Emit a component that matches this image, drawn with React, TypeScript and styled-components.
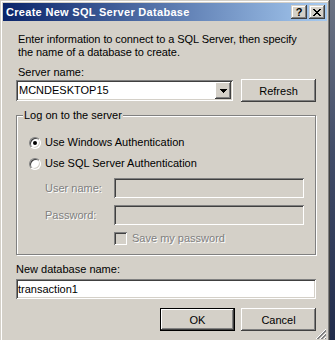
import * as React from "react";
import styled, {createGlobalStyle, css} from "styled-components";

const face = "#D4D0C8";
const shadow = "#808080";
const dark = "#404040";
const light = "#FFFFFF";

const raised = css`
    background: ${face};
    box-shadow: inset -1px -1px ${dark}, inset 1px 1px ${light},
        inset -2px -2px ${shadow}, inset 2px 2px ${face};
`;

const sunken = css`
    box-shadow: inset 1px 1px ${shadow}, inset -1px -1px ${light},
        inset 2px 2px ${dark}, inset -2px -2px ${face};
`;

const GlobalStyle = createGlobalStyle`
    html, body {
        margin: 0;
        padding: 0;
    }
    body {
        width: 335px;
        height: 340px;
        overflow: hidden;
        background: linear-gradient(180deg, #6b7384 0%, #414c68 45%, #212c4c 100%);
        font-family: "Liberation Sans", Arial, sans-serif;
        font-size: 11px;
        color: #000;
    }
`;

const Window = styled.div`
    position: relative;
    box-sizing: border-box;
    width: 330px;
    height: 343px;
    padding: 3px;
    background: ${face};
    box-shadow: inset -1px -1px ${dark}, inset 1px 1px ${face},
        inset -2px -2px ${shadow}, inset 2px 2px ${light};
    display: flex;
    flex-direction: column;
`;

const TitleBar = styled.div`
    display: flex;
    align-items: center;
    flex-shrink: 0;
    height: 18px;
    padding: 0 2px 0 3px;
    background: linear-gradient(90deg, #0a246a 0%, #a6caf0 100%);
`;

const Title = styled.span`
    flex: 1;
    color: #fff;
    font-weight: bold;
    font-size: 11px;
    letter-spacing: 0.3px;
    white-space: nowrap;
`;

const CaptionButton = styled.div`
    box-sizing: border-box;
    width: 16px;
    height: 14px;
    margin-left: 2px;
    display: flex;
    align-items: center;
    justify-content: center;
    font-weight: bold;
    font-size: 11px;
    line-height: 14px;
    background: ${face};
    box-shadow: inset -1px -1px ${dark}, inset 1px 1px ${face},
        inset -2px -2px ${shadow}, inset 2px 2px ${light};
`;

const Body = styled.div`
    display: flex;
    flex-direction: column;
    padding: 12px 11px 0 13px;
`;

const Intro = styled.p`
    margin: 0 0 7px 2px;
    line-height: 13px;
    letter-spacing: -0.08px;
    white-space: nowrap;
`;

const FieldLabel = styled.label<{$indent?: number}>`
    display: block;
    line-height: 13px;
    white-space: nowrap;
    padding-left: ${(p) => p.$indent ?? 0}px;
`;

const ServerRow = styled.div`
    display: flex;
    align-items: center;
    gap: 8px;
    height: 23px;
`;

const Combo = styled.div`
    box-sizing: border-box;
    display: flex;
    align-items: center;
    width: 217px;
    height: 21px;
    padding: 2px;
    background: #fff;
    ${sunken};
`;

const ComboText = styled.span`
    flex: 1;
    padding-left: 1px;
    line-height: 17px;
`;

const DropButton = styled.div`
    box-sizing: border-box;
    width: 16px;
    height: 17px;
    display: flex;
    align-items: center;
    justify-content: center;
    ${raised};
`;

const PushButton = styled.button<{$default?: boolean}>`
    box-sizing: border-box;
    width: 75px;
    height: 23px;
    padding: 0;
    border: none;
    font-family: "Liberation Sans", Arial, sans-serif;
    font-size: 11px;
    font-weight: normal;
    color: #000;
    ${raised};
    ${(p) => p.$default && css`
        box-shadow: inset 0 0 0 1px #000, inset -2px -2px ${dark}, inset 2px 2px ${light},
            inset -3px -3px ${shadow}, inset 3px 3px ${face};
    `}
`;

const GroupBox = styled.fieldset`
    margin: 7px 0 0;
    padding: 0;
    min-width: 0;
    border: 1px solid ${shadow};
    box-shadow: inset 1px 1px ${light}, 1px 1px ${light};
`;

const Legend = styled.legend`
    margin-left: 6px;
    padding: 0 1px;
    line-height: 13px;
    background: ${face};
`;

const GroupContent = styled.div`
    display: flex;
    flex-direction: column;
    padding: 14px 11px 9px 12px;
`;

const RadioRow = styled.label`
    display: flex;
    align-items: center;
    gap: 4px;
    height: 13px;
    line-height: 13px;
    margin-bottom: 8px;
`;

const Radio = styled.span<{$checked?: boolean}>`
    box-sizing: border-box;
    width: 12px;
    height: 12px;
    border-radius: 50%;
    background: #fff;
    border: 1px solid;
    border-color: ${shadow} ${light} ${light} ${shadow};
    box-shadow: inset 1px 1px ${dark}, inset -1px -1px ${face};
    display: flex;
    align-items: center;
    justify-content: center;
    &::after {
        content: "";
        width: 4px;
        height: 4px;
        border-radius: 50%;
        background: ${(p) => (p.$checked ? "#000" : "transparent")};
    }
`;

const CredGrid = styled.div`
    display: grid;
    grid-template-columns: 69px 190px;
    row-gap: 7px;
    margin-left: 16px;
`;

const DisabledText = styled.span`
    color: ${shadow};
    text-shadow: 1px 1px ${light};
    line-height: 13px;
    white-space: nowrap;
`;

const GridLabel = styled(DisabledText)`
    align-self: center;
    padding-top: 1px;
`;

const Edit = styled.input`
    box-sizing: border-box;
    width: 100%;
    height: 20px;
    margin: 0;
    padding: 0 2px;
    border: none;
    outline: none;
    font-family: "Liberation Sans", Arial, sans-serif;
    font-size: 11px;
    color: #000;
    background: #fff;
    ${sunken};
    &:disabled {
        background: ${face};
    }
`;

const CheckRow = styled.label`
    grid-column: 2;
    display: flex;
    align-items: center;
    gap: 5px;
    height: 13px;
`;

const CheckBox = styled.span`
    box-sizing: border-box;
    width: 13px;
    height: 13px;
    background: ${face};
    ${sunken};
`;

const DbLabelWrap = styled.div`
    margin-top: 8px;
    margin-bottom: 3px;
`;

const ButtonRow = styled.div`
    display: flex;
    justify-content: flex-end;
    gap: 6px;
    margin-top: 9px;
`;

const SizeGrip = styled.svg`
    position: absolute;
    right: 3px;
    bottom: 3px;
`;

const CloseGlyph = () => (
    <svg width="8" height="7" viewBox="0 0 8 7" shapeRendering="crispEdges">
        <path d="M0 0h2v1h-2zM6 0h2v1h-2zM1 1h2v1h-2zM5 1h2v1h-2zM2 2h4v1h-4zM3 3h2v1h-2zM2 4h4v1h-4zM1 5h2v1h-2zM5 5h2v1h-2zM0 6h2v1h-2zM6 6h2v1h-2z" fill="#000"/>
    </svg>
);

const Arrow = () => (
    <svg width="7" height="4" viewBox="0 0 7 4" shapeRendering="crispEdges">
        <path d="M0 0h7v1h-7zM1 1h5v1h-5zM2 2h3v1h-3zM3 3h1v1h-1z" fill="#000"/>
    </svg>
);

export default function App() {
    return (
        <>
            <GlobalStyle/>
            <Window>
                <TitleBar>
                    <Title>Create New SQL Server Database</Title>
                    <CaptionButton>?</CaptionButton>
                    <CaptionButton><CloseGlyph/></CaptionButton>
                </TitleBar>

                <Body>
                    <Intro>
                        Enter information to connect to a SQL Server, then specify<br/>
                        the name of a database to create.
                    </Intro>

                    <FieldLabel $indent={2}>Server name:</FieldLabel>
                    <ServerRow>
                        <Combo>
                            <ComboText>MCNDESKTOP15</ComboText>
                            <DropButton><Arrow/></DropButton>
                        </Combo>
                        <PushButton>Refresh</PushButton>
                    </ServerRow>

                    <GroupBox>
                        <Legend>Log on to the server</Legend>
                        <GroupContent>
                            <RadioRow>
                                <Radio $checked/>
                                <span>Use Windows Authentication</span>
                            </RadioRow>
                            <RadioRow>
                                <Radio/>
                                <span>Use SQL Server Authentication</span>
                            </RadioRow>
                            <CredGrid>
                                <GridLabel>User name:</GridLabel>
                                <Edit disabled/>
                                <GridLabel>Password:</GridLabel>
                                <Edit disabled type="password"/>
                                <CheckRow>
                                    <CheckBox/>
                                    <DisabledText>Save my password</DisabledText>
                                </CheckRow>
                            </CredGrid>
                        </GroupContent>
                    </GroupBox>

                    <DbLabelWrap>
                        <FieldLabel>New database name:</FieldLabel>
                    </DbLabelWrap>
                    <Edit defaultValue="transaction1"/>

                    <ButtonRow>
                        <PushButton $default>OK</PushButton>
                        <PushButton>Cancel</PushButton>
                    </ButtonRow>
                </Body>

                <SizeGrip width="12" height="12" viewBox="0 0 12 12" shapeRendering="crispEdges">
                    <path d="M11 1L1 11M11 5L5 11M11 9L9 11" stroke={light} strokeWidth="1"/>
                    <path d="M11 2L2 11M11 3L3 11M11 6L6 11M11 7L7 11M11 10L10 11" stroke={shadow} strokeWidth="1"/>
                </SizeGrip>
            </Window>
        </>
    );
}
